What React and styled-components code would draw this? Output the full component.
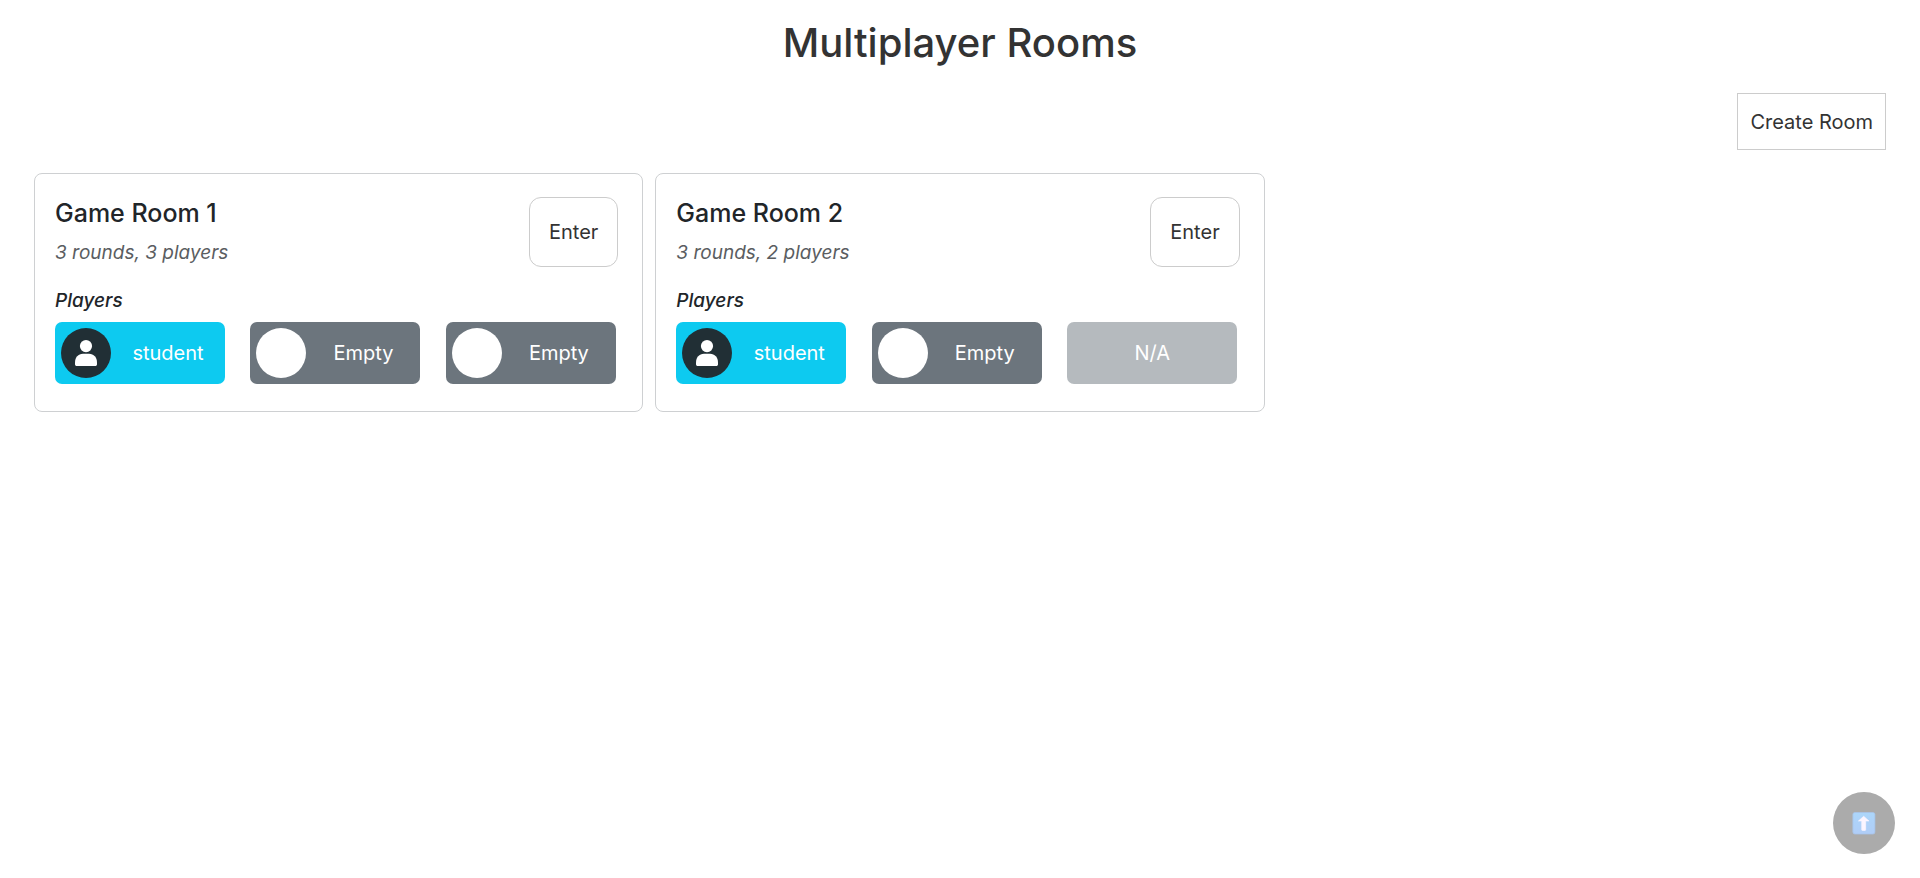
import React from "react";
import styled, { createGlobalStyle } from "styled-components";

const GlobalStyle = createGlobalStyle`
  *, *::before, *::after { box-sizing: border-box; }
  body {
    margin: 0;
    background: #fff;
    color: #212529;
    font-family: Inter, "Liberation Sans", sans-serif;
    font-size: 20px;
    line-height: 30px;
  }
`;

const Page = styled.main`
  padding: 19px 34px 0;
`;

const PageTitle = styled.h1`
  margin: 0 0 26px;
  font-size: 40px;
  font-weight: 500;
  line-height: 48px;
  text-align: center;
  color: #333;
`;

const Toolbar = styled.div`
  display: flex;
  justify-content: flex-end;
  margin-bottom: 23px;
`;

const OutlineButton = styled.button`
  flex: none;
  padding: ${({ $rounded }) => ($rounded ? "19px" : "13px 12px 12px")};
  border: 1px solid #ccc;
  border-radius: ${({ $rounded }) => ($rounded ? "12px" : "0")};
  background: #fff;
  color: #333;
  font: inherit;
  cursor: pointer;
`;

const RoomGrid = styled.section`
  display: grid;
  grid-template-columns: repeat(3, 1fr);
  gap: 12px;
`;

const RoomCard = styled.article`
  padding: 23px 0 27px 20px;
  border: 1px solid #ced0d2;
  border-radius: 8px;
`;

const RoomHeader = styled.header`
  display: flex;
  justify-content: space-between;
  align-items: flex-start;
  margin-bottom: 18px;
  padding-right: 24px;
`;

const RoomName = styled.h2`
  margin: 0 0 9px;
  font-size: 25px;
  font-weight: 500;
  line-height: 32px;
`;

const RoomInfo = styled.p`
  margin: 0;
  font-size: 19px;
  font-style: italic;
  color: #5a5d61;
`;

const PlayersLabel = styled.h3`
  margin: 0 0 6px;
  font-size: 19px;
  font-style: italic;
  font-weight: 500;
  line-height: 30px;
`;

const Seats = styled.ul`
  display: grid;
  grid-template-columns: repeat(3, 1fr);
  margin: 0;
  padding: 0 1px 0 0;
  list-style: none;
`;

const seatColors = { taken: "#0dcaf0", empty: "#6c757d", closed: "#b5babe" };

const Seat = styled.li`
  display: flex;
  align-items: center;
  width: 170px;
  height: 62px;
  border-radius: 7px;
  background: ${({ $state }) => seatColors[$state]};
  color: #fff;
`;

const Avatar = styled.span`
  display: grid;
  place-items: center;
  width: 50px;
  height: 50px;
  margin-left: 6px;
  border-radius: 50%;
  background: ${({ $filled }) => ($filled ? "#212f35" : "#fff")};
`;

const SeatName = styled.span`
  flex: 1;
  text-align: center;
`;

const TopButton = styled.button`
  position: fixed;
  right: 25px;
  bottom: 24px;
  display: grid;
  place-items: center;
  width: 62px;
  height: 62px;
  padding: 0;
  border: 0;
  border-radius: 50%;
  background: #ababab;
  cursor: pointer;
`;

const PersonIcon = () => (
  <svg width="22" height="26" viewBox="0 0 22 26" fill="#fff" aria-hidden="true">
    <circle cx="11" cy="6.1" r="6.1" />
    <path d="M0 22.5C0 17.5 3.2 13.7 8 13.7h6c4.800 0 8 3.800 8 8.800v1.700C22 25.400 21.200 26 20.200 26H1.800C.8 26 0 25.400 0 24.200z" />
  </svg>
);

const UpIcon = () => (
  <svg width="24" height="24" viewBox="0 0 24 24" aria-hidden="true">
    <defs>
      <linearGradient id="tile" x1="0" y1="0" x2="0" y2="1">
        <stop offset="0" stopColor="#acd6fa" />
        <stop offset="1" stopColor="#b0cdf7" />
      </linearGradient>
    </defs>
    <rect x=".9" y="1.500" width="22" height="21.500" rx="2" fill="url(#tile)" stroke="#a8c4ea" strokeWidth=".8" />
    <path
      d="M11.700 5.300l5.300 4.700h-3.300v8.700q0 .7-.7.7h-2.600q-.7 0-.7-.7V10H6.400z"
      fill="#fbf5ff"
      stroke="#fbf5ff"
      strokeWidth=".6"
      strokeLinejoin="round"
    />
  </svg>
);

const rooms = [
  {
    name: "Game Room 1",
    info: "3 rounds, 3 players",
    seats: [
      { state: "taken", name: "student" },
      { state: "empty", name: "Empty" },
      { state: "empty", name: "Empty" },
    ],
  },
  {
    name: "Game Room 2",
    info: "3 rounds, 2 players",
    seats: [
      { state: "taken", name: "student" },
      { state: "empty", name: "Empty" },
      { state: "closed", name: "N/A" },
    ],
  },
];

export default function App() {
  return (
    <>
      <GlobalStyle />
      <Page>
        <PageTitle>Multiplayer Rooms</PageTitle>
        <Toolbar>
          <OutlineButton type="button">Create Room</OutlineButton>
        </Toolbar>
        <RoomGrid>
          {rooms.map((room) => (
            <RoomCard key={room.name}>
              <RoomHeader>
                <div>
                  <RoomName>{room.name}</RoomName>
                  <RoomInfo>{room.info}</RoomInfo>
                </div>
                <OutlineButton type="button" $rounded>Enter</OutlineButton>
              </RoomHeader>
              <PlayersLabel>Players</PlayersLabel>
              <Seats>
                {room.seats.map((seat, i) => (
                  <Seat key={i} $state={seat.state}>
                    {seat.state !== "closed" && (
                      <Avatar $filled={seat.state === "taken"}>
                        {seat.state === "taken" && <PersonIcon />}
                      </Avatar>
                    )}
                    <SeatName>{seat.name}</SeatName>
                  </Seat>
                ))}
              </Seats>
            </RoomCard>
          ))}
        </RoomGrid>
      </Page>
      <TopButton type="button" aria-label="Back to top">
        <UpIcon />
      </TopButton>
    </>
  );
}
